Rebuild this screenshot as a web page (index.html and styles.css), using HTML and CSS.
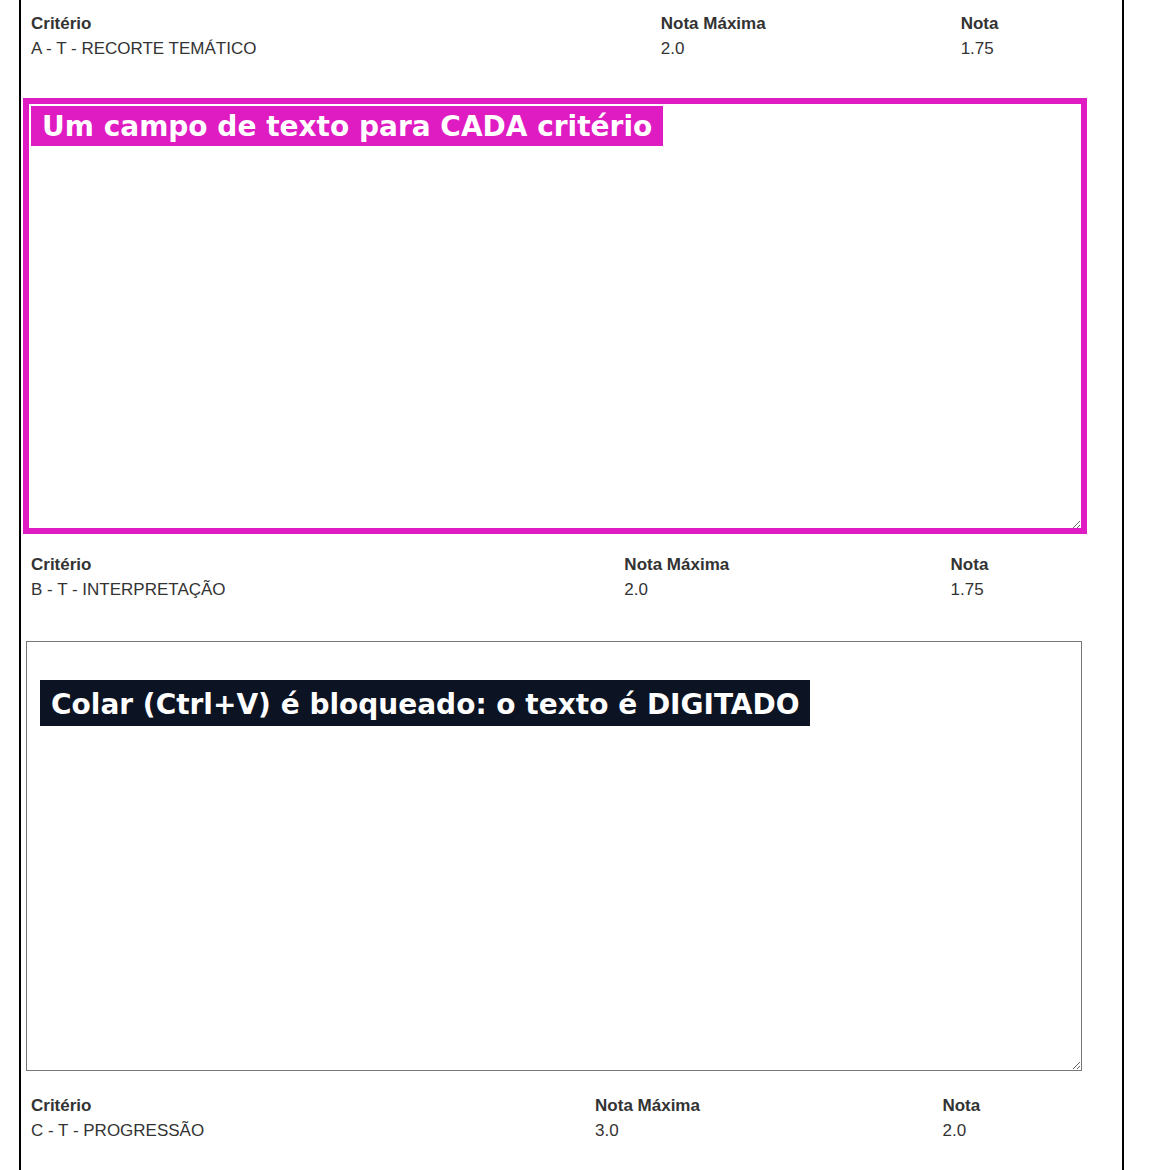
FILE: index.html
```html
<!DOCTYPE html>
<html lang="pt-BR">
<head>
<meta charset="utf-8">
<title>Critérios</title>
<link rel="stylesheet" href="styles.css">
</head>
<body>
<div class="frame">
  <table class="crit">
    <tr><th>Critério</th><th>Nota Máxima</th><th>Nota</th></tr>
    <tr><td>A - T - RECORTE TEMÁTICO</td><td>2.0</td><td>1.75</td></tr>
  </table>
  <div class="field">
    <textarea class="box"></textarea>
    <div class="hl"></div>
    <div class="tag tag-pink">Um campo de texto para CADA critério</div>
  </div>

  <table class="crit">
    <tr><th>Critério</th><th>Nota Máxima</th><th>Nota</th></tr>
    <tr><td>B - T - INTERPRETAÇÃO</td><td>2.0</td><td>1.75</td></tr>
  </table>
  <div class="field">
    <textarea class="box"></textarea>
    <div class="tag tag-dark">Colar (Ctrl+V) é bloqueado: o texto é DIGITADO</div>
  </div>

  <table class="crit">
    <tr><th>Critério</th><th>Nota Máxima</th><th>Nota</th></tr>
    <tr><td>C - T - PROGRESSÃO</td><td>3.0</td><td>2.0</td></tr>
  </table>
  <div class="field">
    <textarea class="box"></textarea>
  </div>
</div>
</body>
</html>
```

FILE: styles.css
```css
html, body {
  margin: 0;
  padding: 0;
  background: #fff;
}

body {
  font-family: "Liberation Sans", Arial, sans-serif;
  color: #333;
}

.frame {
  box-sizing: border-box;
  margin-left: 19px;
  width: 1105px;
  border-left: 2px solid #000;
  border-right: 2px solid #000;
  padding: 10px 0 0 5px;
  min-height: 1170px;
}

.crit {
  width: 1048px;
  margin-left: 1px;
  border-spacing: 2px;
  font-size: 17px;
  line-height: 19px;
}

.crit th,
.crit td {
  padding: 2px 2px;
  text-align: left;
  vertical-align: top;
}

.crit th {
  font-weight: bold;
}

.crit td {
  font-weight: normal;
}

.field {
  position: relative;
  width: 1056px;
  margin: 38px 0 21px 0;
}

.box {
  display: block;
  box-sizing: border-box;
  width: 1056px;
  height: 430px;
  margin: 0;
  border: 1px solid #767676;
  background: #fff;
  font-family: "Liberation Sans", Arial, sans-serif;
}

.hl {
  position: absolute;
  left: -3px;
  top: -2px;
  width: 1064px;
  height: 436px;
  box-sizing: border-box;
  border: 6px solid #df1cc2;
  pointer-events: none;
}

.tag {
  position: absolute;
  font-family: "DejaVu Sans", sans-serif;
  font-weight: bold;
  font-size: 28px;
  color: #fff;
  white-space: nowrap;
}

.tag-pink {
  left: 5px;
  top: 6px;
  height: 39px;
  line-height: 39px;
  padding: 1px 11px 0 11px;
  background: #df1cc2;
}

.tag-dark {
  left: 14px;
  top: 39px;
  height: 43px;
  line-height: 43px;
  padding: 3px 10px 0 11px;
  background: #0c1423;
}
```
